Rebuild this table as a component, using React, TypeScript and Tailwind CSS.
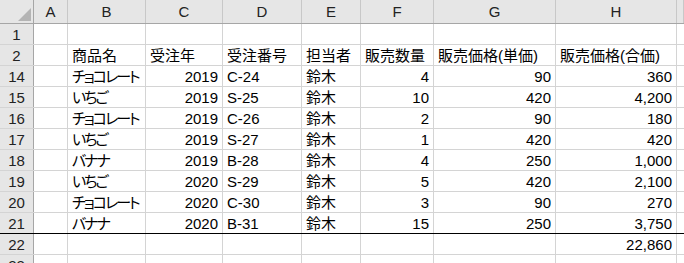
import React from "react";

type Row = {
  n: string;
  cells: string[];
};

const COLS = ["A", "B", "C", "D", "E", "F", "G", "H", ""];
// true = right aligned (numbers)
const RIGHT = [false, false, true, false, false, true, true, true, false];

const rows: Row[] = [
  { n: "1", cells: ["", "", "", "", "", "", "", "", ""] },
  {
    n: "2",
    cells: ["", "商品名", "受注年", "受注番号", "担当者", "販売数量", "販売価格(単価)", "販売価格(合価)", ""],
  },
  { n: "14", cells: ["", "チョコレート", "2019", "C-24", "鈴木", "4", "90", "360", ""] },
  { n: "15", cells: ["", "いちご", "2019", "S-25", "鈴木", "10", "420", "4,200", ""] },
  { n: "16", cells: ["", "チョコレート", "2019", "C-26", "鈴木", "2", "90", "180", ""] },
  { n: "17", cells: ["", "いちご", "2019", "S-27", "鈴木", "1", "420", "420", ""] },
  { n: "18", cells: ["", "バナナ", "2019", "B-28", "鈴木", "4", "250", "1,000", ""] },
  { n: "19", cells: ["", "いちご", "2020", "S-29", "鈴木", "5", "420", "2,100", ""] },
  { n: "20", cells: ["", "チョコレート", "2020", "C-30", "鈴木", "3", "90", "270", ""] },
  { n: "21", cells: ["", "バナナ", "2020", "B-31", "鈴木", "15", "250", "3,750", ""] },
  { n: "22", cells: ["", "", "", "", "", "", "", "22,860", ""] },
  { n: "23", cells: ["", "", "", "", "", "", "", "", ""] },
];

const grid =
  "grid grid-cols-[34px_34px_78px_77px_79px_59px_73px_122px_121px_1fr]";

export default function App() {
  return (
    <div className="w-[684px] h-[263px] overflow-hidden bg-white text-[15px] text-black font-['Liberation_Sans','Noto_Sans_CJK_JP',sans-serif] [font-feature-settings:'palt']">
      {/* column headers */}
      <div className={`${grid} h-[24px] bg-[#e6e6e6] border-b border-[#a6a6a6]`}>
        <div className="relative border-r border-[#a6a6a6]">
          <svg className="absolute left-[18px] top-[8px]" width="13" height="13" viewBox="0 0 13 13">
            <polygon points="13,0 13,13 0,13" fill="#b4b4b4" />
          </svg>
        </div>
        {COLS.map((c, i) => (
          <div
            key={i}
            className="flex items-center justify-center border-r border-[#c8c8c8] text-[#222] leading-none"
          >
            {c}
          </div>
        ))}
      </div>

      {rows.map((r) => (
        <div
          key={r.n}
          className={`${grid} h-[21px] ${r.n === "21" ? "border-b border-black" : "border-b border-[#d4d4d4]"}`}
        >
          <div className="flex items-center justify-center bg-[#e6e6e6] border-r border-[#a6a6a6] text-[#222] leading-none">
            {r.n}
          </div>
          {r.cells.map((v, i) => (
            <div
              key={i}
              className={`flex items-center border-r border-[#d4d4d4] px-[4px] leading-none whitespace-nowrap ${
                RIGHT[i] && r.n !== "2" ? "justify-end" : "justify-start"
              } ${i === 1 && r.n !== "2" ? "tracking-[-2px]" : ""}`}
            >
              {v}
            </div>
          ))}
        </div>
      ))}
    </div>
  );
}
